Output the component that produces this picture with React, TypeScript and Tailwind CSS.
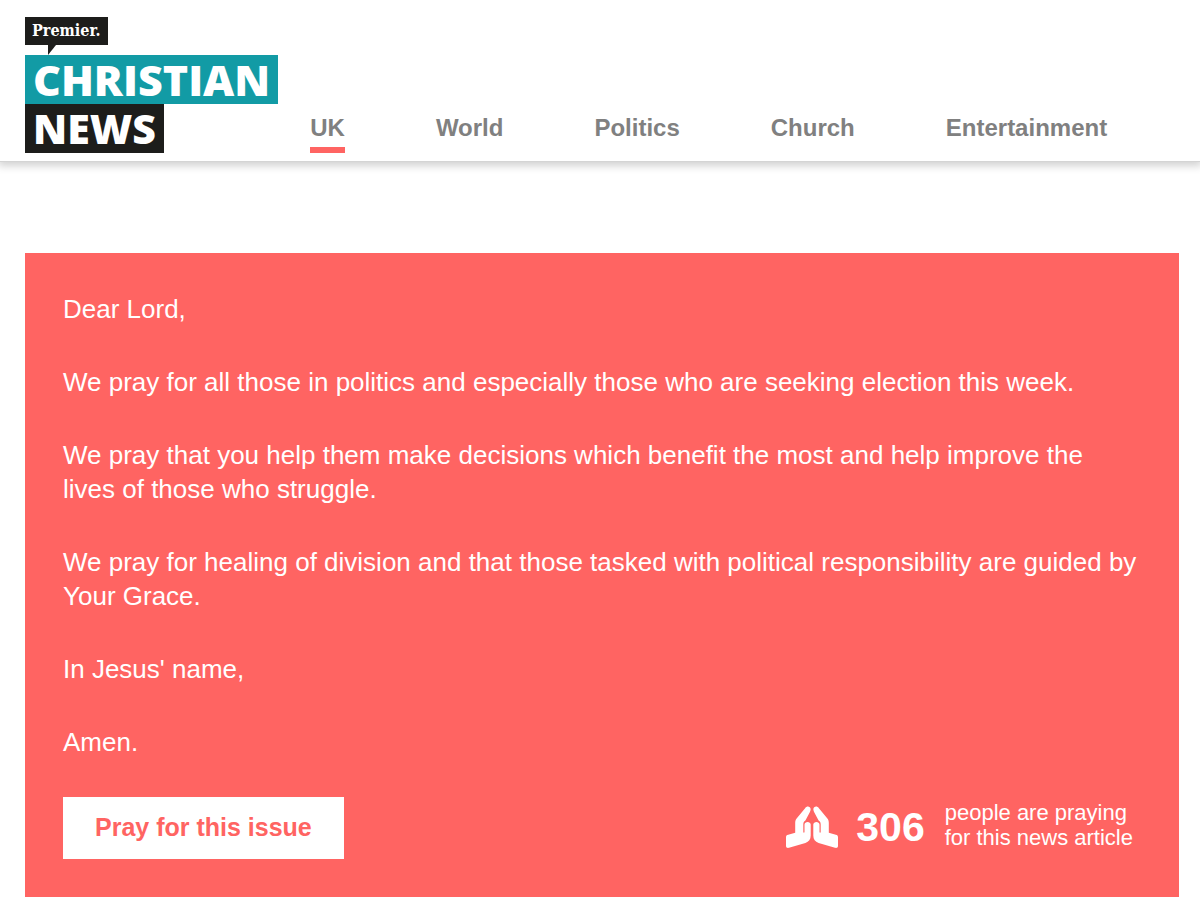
const sections = ["UK", "World", "Politics", "Church", "Entertainment"];

const prayer = [
  "Dear Lord,",
  "We pray for all those in politics and especially those who are seeking election this week.",
  "We pray that you help them make decisions which benefit the most and help improve the lives of those who struggle.",
  "We pray for healing of division and that those tasked with political responsibility are guided by Your Grace.",
  "In Jesus' name,",
  "Amen.",
];

function Logo() {
  return (
    <a
      href="#"
      aria-label="Premier Christian News"
      className="flex shrink-0 flex-col items-start text-white"
    >
      <span className="h-[28px] bg-[#1d1d1b] px-[7px] font-['DejaVu_Serif_Condensed','DejaVu_Serif',serif] text-[16px] leading-[27px] font-bold">
        Premier.
      </span>
      <svg className="ml-[22px] h-[10px] w-[9px]" viewBox="0 0 9 10">
        <path d="M1 0H9L1 10Z" fill="#1d1d1b" />
      </svg>
      <span className="flex h-[49px] items-center bg-[#129ba5] px-2 font-['Open_Sans',sans-serif] text-[43px] leading-[47px] font-extrabold">
        CHRISTIAN
      </span>
      <span className="flex h-[49px] items-center bg-[#1d1d1b] px-2 font-['Open_Sans',sans-serif] text-[41px] leading-[47px] font-extrabold">
        NEWS
      </span>
    </a>
  );
}

function PrayingHands() {
  const hand =
    "M19.3 2C20.8 -0.6 25 0.2 24.6 3.8C24.5 4.8 24.2 5.4 23.8 6.2L19.4 14.6C17.9 15.4 17.3 16.8 17.3 18.4V26C17.3 27 18.5 27 18.5 26V18.5C18.5 15 24.7 15 24.7 18.5V29.5C24.7 33.4 22.8 35.8 19.4 37L3 41.8C1.2 42.2 0 41.5 0 40V31.5C0 29.8 0.7 29.2 2.2 28.8L9.2 26.8V17C9.2 15.4 9.4 14.4 10.2 13Z";
  return (
    <svg
      className="h-[42px] w-[52px] shrink-0"
      viewBox="0 0 52 42"
      fill="currentColor"
      aria-hidden="true"
    >
      <path d={hand} />
      <path d={hand} transform="translate(52 0) scale(-1 1)" />
    </svg>
  );
}

export default function App() {
  return (
    <div className="overflow-hidden bg-white font-['Liberation_Sans',Arial,sans-serif]">
      <header className="flex items-end gap-8 border-b border-[#d4d4d4] px-[25px] pt-[17px] pb-2 shadow-[0_2px_8px_2px_rgba(0,0,0,0.18)]">
        <Logo />
        <nav className="flex gap-[91px] text-[24px] leading-[30px] font-bold text-[#808080]">
          {sections.map((name) => (
            <a
              key={name}
              href="#"
              className={
                name === "UK"
                  ? "border-b-6 border-[#ff6462] pb-1"
                  : "border-b-6 border-transparent pb-1"
              }
            >
              {name}
            </a>
          ))}
        </nav>
      </header>

      <main className="mt-[91px] mr-[21px] mb-[14px] ml-[25px] bg-[#ff6462] px-[38px] pt-[39px] pb-[38px] text-white">
        <div className="flex flex-col gap-[39px] text-[26px] leading-[34px]">
          {prayer.map((text) => (
            <p key={text}>{text}</p>
          ))}
        </div>

        <div className="mt-[38px] flex items-center justify-between">
          <button
            type="button"
            className="h-[62px] bg-white px-8 text-[25px] font-bold text-[#ff6462]"
          >
            Pray for this issue
          </button>
          <div className="mr-2 flex items-center pb-[2px]">
            <PrayingHands />
            <span className="ml-[18px] text-[41px] leading-[48px] font-bold">
              306
            </span>
            <span className="ml-5 pb-1 text-[22px] leading-[25px]">
              people are praying
              <br />
              for this news article
            </span>
          </div>
        </div>
      </main>
    </div>
  );
}
